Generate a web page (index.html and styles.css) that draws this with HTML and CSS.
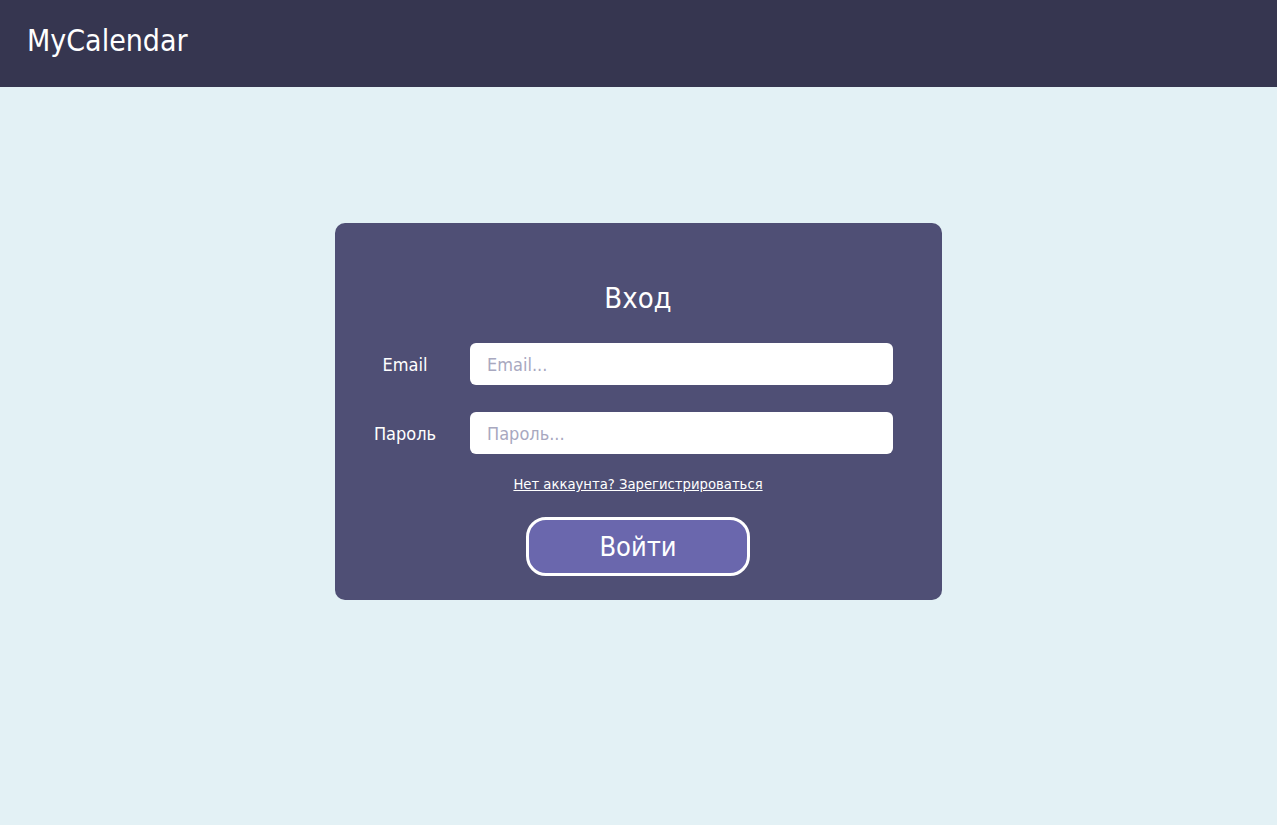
FILE: index.html
```html
<!DOCTYPE html>
<html lang="ru">
<head>
<meta charset="utf-8">
<title>MyCalendar</title>
<link rel="stylesheet" href="styles.css">
</head>
<body>
<header class="topbar">
  <div class="brand">MyCalendar</div>
</header>
<main class="page">
  <form class="card">
    <h1 class="title">Вход</h1>
    <div class="row">
      <label class="label" for="email">Email</label>
      <input class="field" id="email" type="text" placeholder="Email...">
    </div>
    <div class="row">
      <label class="label" for="pass">Пароль</label>
      <input class="field" id="pass" type="password" placeholder="Пароль...">
    </div>
    <a class="link" href="#">Нет аккаунта? Зарегистрироваться</a>
    <button class="btn" type="button">Войти</button>
  </form>
</main>
</body>
</html>
```

FILE: styles.css
```css
* { box-sizing: border-box; }
html, body { margin: 0; padding: 0; }
body {
  background: #e3f1f5;
  font-family: "DejaVu Sans Condensed", "DejaVu Sans", sans-serif;
  min-height: 825px;
}
.topbar {
  height: 87px;
  background: #363650;
  display: flex;
  align-items: center;
  padding-left: 27px;
}
.brand {
  color: #ffffff;
  font-size: 30px;
  line-height: 36px;
  font-stretch: condensed;
  margin-top: -6px;
}
.page {
  display: flex;
  justify-content: center;
  padding-top: 136px;
}
.card {
  width: 607px;
  background: #4f4f75;
  border-radius: 10px;
  padding: 57px 49px 24px 25px;
  display: flex;
  flex-direction: column;
  align-items: center;
}
.title {
  margin: 0 0 27px 23px;
  font-weight: normal;
  color: #ffffff;
  font-size: 29px;
  line-height: 36px;
}
.row {
  width: 100%;
  display: grid;
  grid-template-columns: 90px 1fr;
  column-gap: 20px;
  align-items: center;
  margin-bottom: 27px;
}
.row + .row { margin-bottom: 21px; }
.label {
  color: #ffffff;
  font-size: 18px;
  text-align: center;
}
.field {
  height: 42px;
  border: none;
  border-radius: 6px;
  background: #ffffff;
  padding: 0 17px;
  font-family: inherit;
  font-size: 18px;
  color: #333;
  outline: none;
}
.field::placeholder { color: #a8a8bf; }
.link {
  color: #ffffff;
  font-size: 14.7px;
  line-height: 18px;
  text-decoration: underline;
  margin-left: 23px;
  margin-bottom: 24px;
}
.btn {
  width: 224px;
  height: 59px;
  margin-left: 23px;
  background: #6a67ad;
  border: 3px solid #ffffff;
  border-radius: 20px;
  color: #ffffff;
  font-family: inherit;
  font-size: 27px;
  line-height: 1;
  cursor: pointer;
}
```
